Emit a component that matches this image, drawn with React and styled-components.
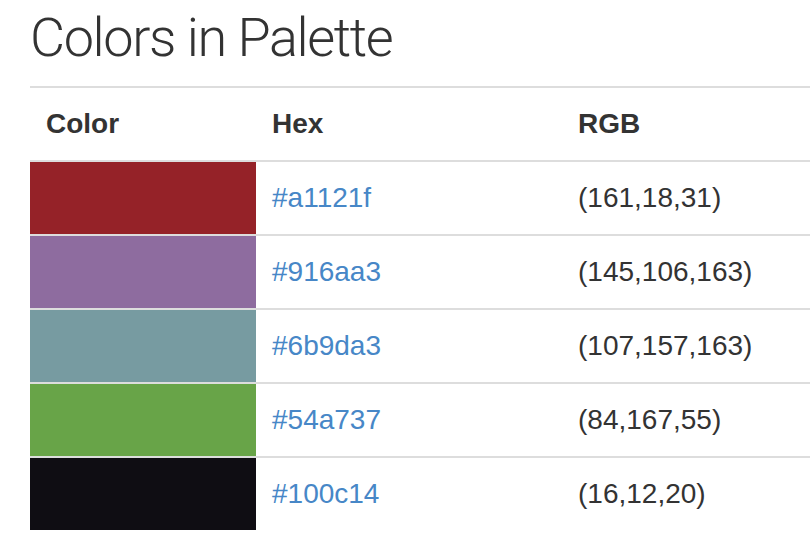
import React from 'react'
import styled, { createGlobalStyle } from 'styled-components'

const GlobalStyle = createGlobalStyle`
  html, body {
    margin: 0;
    padding: 0;
    background: #fff;
    overflow: hidden;
  }
  body {
    font-family: "Liberation Sans", Arial, sans-serif;
    color: #333;
  }
`;

const Page = styled.div`
  padding: 0 0 0 30px;
`;

const Title = styled.h2`
  margin: 0;
  padding: 8px 0 0 0;
  height: 78px;
  font-family: Roboto, "Liberation Sans", sans-serif;
  font-weight: 300;
  font-size: 54px;
  line-height: 60px;
  letter-spacing: -1.4px;
  color: #333;
`;

const Table = styled.table`
  width: 100%;
  border-collapse: collapse;
  border-spacing: 0;
  font-size: 28px;
  line-height: 40px;
`;

const Th = styled.th`
  text-align: left;
  font-weight: bold;
  padding: 16px;
  border-top: 2px solid #ddd;
  width: ${p => p.$w || 'auto'};
  box-sizing: border-box;
`;

const Td = styled.td`
  padding: 16px;
  border-top: 2px solid #ddd;
  color: #333;
`;

const Swatch = styled.td`
  padding: 0;
  border-top: 2px solid #ddd;
  background: ${p => p.$color};
  height: 72px;
`;

const HexLink = styled.a`
  color: #4787c7;
  text-decoration: none;
`;

const colors = [
  { hex: '#a1121f', rgb: '(161,18,31)', shown: '#952228' },
  { hex: '#916aa3', rgb: '(145,106,163)', shown: '#8e6c9f' },
  { hex: '#6b9da3', rgb: '(107,157,163)', shown: '#779ba1' },
  { hex: '#54a737', rgb: '(84,167,55)', shown: '#68a448' },
  { hex: '#100c14', rgb: '(16,12,20)', shown: '#0f0d13' },
];

export default function App() {
  return (
    <Page>
      <GlobalStyle />
      <Title>Colors in Palette</Title>
      <Table>
        <thead>
          <tr>
            <Th $w="226px">Color</Th>
            <Th $w="306px">Hex</Th>
            <Th>RGB</Th>
          </tr>
        </thead>
        <tbody>
          {colors.map(c => (
            <tr key={c.hex}>
              <Swatch $color={c.shown} />
              <Td><HexLink href="#">{c.hex}</HexLink></Td>
              <Td>{c.rgb}</Td>
            </tr>
          ))}
        </tbody>
      </Table>
    </Page>
  )
}
